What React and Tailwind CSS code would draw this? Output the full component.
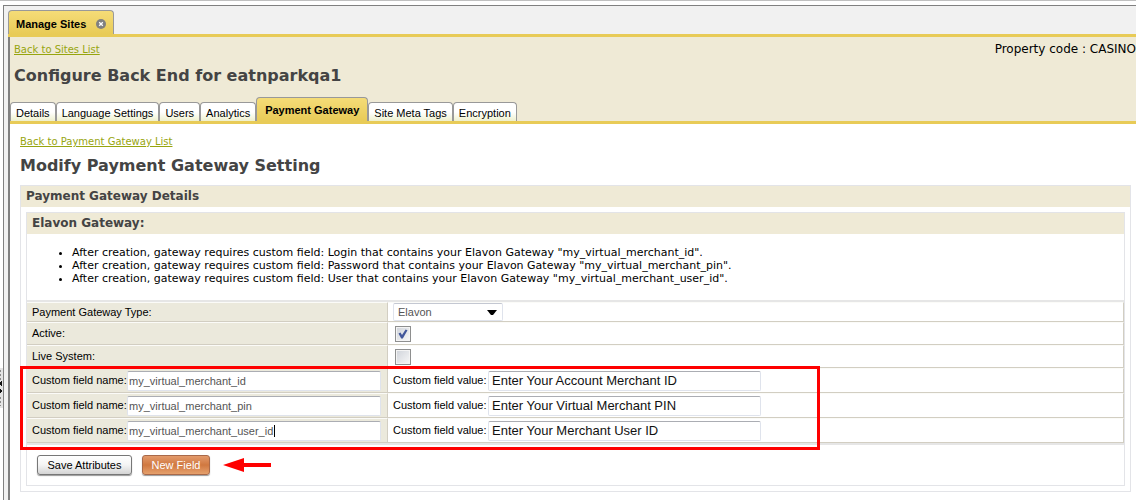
import React, { useState } from "react";
import clsx from "clsx";

const VERDANA = "font-['Verdana','DejaVu_Sans',sans-serif]";

const TABS = [
  "Details",
  "Language Settings",
  "Users",
  "Analytics",
  "Payment Gateway",
  "Site Meta Tags",
  "Encryption",
];

const NOTES = [
  'After creation, gateway requires custom field: Login that contains your Elavon Gateway "my_virtual_merchant_id".',
  'After creation, gateway requires custom field: Password that contains your Elavon Gateway "my_virtual_merchant_pin".',
  'After creation, gateway requires custom field: User that contains your Elavon Gateway "my_virtual_merchant_user_id".',
];

const FIELDS = [
  { name: "my_virtual_merchant_id", value: "Enter Your Account Merchant ID" },
  { name: "my_virtual_merchant_pin", value: "Enter Your Virtual Merchant PIN" },
  { name: "my_virtual_merchant_user_id", value: "Enter Your Merchant User ID", caret: true },
];

function Splitter() {
  return (
    <div className="flex w-[3px] shrink-0 flex-col pt-[363px]">
      <svg className="h-10 w-[3px] bg-[#e4e4e4]" viewBox="0 0 3 40" shapeRendering="crispEdges" aria-hidden="true">
        <path d="M0 2h1v2H0zM0 6h1v2H0zM0 10h1v2H0zM0 29h1v2H0zM0 33h1v2H0zM0 37h1v1H0z" fill="#8a8a8a" />
        <path d="M2 13v5H1v-1H0v-3h1v-1zM0 21h1v1h1v2H1v1H0z" fill="#111" />
      </svg>
    </div>
  );
}

function SiteTab() {
  return (
    <div className="flex h-6 items-center gap-[10px] self-start rounded-t-[4px] border border-b-0 border-[#999] bg-gradient-to-b from-[#f5dc77] to-[#e8cb57] px-[7px] pt-[2px]">
      <span className="text-[11px] leading-4 font-bold">Manage Sites</span>
      <button type="button" aria-label="Close Manage Sites" className="block size-[10px]">
        <svg viewBox="0 0 10 10" className="size-[10px]" aria-hidden="true">
          <circle cx="5" cy="5" r="5" fill="#808080" />
          <path d="M3.2 3.2l3.6 3.6M6.8 3.2L3.2 6.8" stroke="#fff" strokeWidth="1.3" />
        </svg>
      </button>
    </div>
  );
}

function TabBar() {
  return (
    <nav className="flex items-end border-b-[3px] border-[#e8cb57]">
      {TABS.map((tab) => {
        const active = tab === "Payment Gateway";
        return (
          <a
            key={tab}
            href="#"
            className={clsx(
              "flex items-center rounded-t-[4px] border border-b-0 border-[#999] text-[11px] whitespace-nowrap",
              active
                ? "h-6 bg-gradient-to-b from-[#f5dc77] to-[#e8cb57] px-2 pt-[2px] font-bold"
                : "h-[19px] bg-gradient-to-b from-white from-50% to-[#eef0cd] px-[5px] pt-[3px]"
            )}
          >
            {tab}
          </a>
        );
      })}
    </nav>
  );
}

function CheckBox({ id, defaultChecked }) {
  return (
    <span className="ml-[2px] grid size-4">
      <input
        id={id}
        type="checkbox"
        defaultChecked={defaultChecked}
        className="peer col-start-1 row-start-1 size-4 appearance-none border border-[#8e8f8f] bg-gradient-to-br from-[#cfd3da] to-[#f8f8f8] outline-1 -outline-offset-2 outline-[#f4f4f4]"
      />
      <svg viewBox="0 0 16 16" className="pointer-events-none invisible col-start-1 row-start-1 size-4 peer-checked:visible" aria-hidden="true">
        <path d="M3.5 7.5l2-1L7 9l3.6-5.5 1.9.7L7.8 12.5H6.2z" fill="#42579b" />
      </svg>
    </span>
  );
}

function Row({ height, label, children }) {
  return (
    <tr className={height}>
      <th scope="row" className="w-[361px] border-t border-r border-b border-t-[#fbfbf8] border-r-[#d2cec2] border-b-[#d2cec2] bg-[#ebe9dc] py-0 pr-0 pl-[5px] text-left align-middle font-normal">
        {label}
      </th>
      <td className="border-t border-r border-b border-t-[#fbfbf8] border-r-[#d2cec2] border-b-[#d2cec2] py-0 pr-0 pl-[5px] align-middle">
        {children}
      </td>
    </tr>
  );
}

const inputBox =
  "block h-5 rounded-[2px] border border-[#dfe3ec] border-t-[#abadb3] bg-white outline-none";

function SettingsTable() {
  const [fields, setFields] = useState(FIELDS);
  const update = (index, key, text) =>
    setFields(fields.map((field, i) => (i === index ? { ...field, [key]: text } : field)));

  return (
    <div className="relative border-y-2 border-[#e6e6e6]">
      <table className="w-full table-fixed border-separate border-spacing-0">
        <tbody>
          <Row height="h-5" label={<label htmlFor="gateway-type">Payment Gateway Type:</label>}>
            <span className="relative block w-[110px]">
              <select id="gateway-type" className="block h-[18px] w-full appearance-none rounded-[2px] border border-[#dfe3ec] border-t-[#c4c8d2] bg-white px-1 text-[11px] leading-4 text-[#555] outline-none">
                <option>Elavon</option>
              </select>
              <svg viewBox="0 0 10 6" className="pointer-events-none absolute top-[7px] right-[6px] h-[6px] w-[10px]" aria-hidden="true">
                <path d="M0 0h10L6 5H4z" fill="#000" />
              </svg>
            </span>
          </Row>
          <Row height="h-[23px]" label={<label htmlFor="active">Active:</label>}>
            <CheckBox id="active" defaultChecked />
          </Row>
          <Row height="h-[23px]" label={<label htmlFor="live">Live System:</label>}>
            <CheckBox id="live" />
          </Row>
          {fields.map((field, index) => (
            <Row
              key={index}
              height="h-[25px]"
              label={
                <div className="flex items-center">
                  <label htmlFor={`name-${index}`} className="w-[95px] shrink-0 whitespace-nowrap">
                    Custom field name:
                  </label>
                  <span className="relative">
                    <input
                      id={`name-${index}`}
                      value={field.name}
                      onChange={(e) => update(index, "name", e.target.value)}
                      className={clsx(inputBox, "w-[254px] px-px text-[11px] text-[#555]")}
                    />
                    {field.caret && <span className="absolute top-[4px] left-[147px] h-3 w-px bg-black" />}
                  </span>
                </div>
              }
            >
              <div className="flex items-center">
                <label htmlFor={`value-${index}`} className="w-[95px] shrink-0 whitespace-nowrap">
                  Custom field value:
                </label>
                <input
                  id={`value-${index}`}
                  value={field.value}
                  onChange={(e) => update(index, "value", e.target.value)}
                  className={clsx(inputBox, "w-[273px] px-[3px] text-[13px] text-[#111]")}
                />
              </div>
            </Row>
          ))}
        </tbody>
      </table>
      <div className="pointer-events-none absolute top-[64px] -left-[7px] h-[84px] w-[800px] border-3 border-[#fe0000]" />
    </div>
  );
}

function Actions() {
  return (
    <div className="flex items-center px-[10px] pt-[10px] pb-[10px]">
      <button type="button" className="h-5 w-[95px] rounded-[3px] border border-[#777] bg-gradient-to-b from-white via-[#f4f4f4] to-[#d4d4d4] text-[11px] leading-4 shadow-[0_1px_1px_#999]">
        Save Attributes
      </button>
      <button type="button" className="ml-[10px] h-5 w-[68px] rounded-[3px] border border-[#a8694a] bg-gradient-to-b from-[#e39a6b] via-[#d07840] to-[#e5a06c] text-[11px] leading-4 text-white shadow-[0_1px_1px_#999]">
        New Field
      </button>
      <svg viewBox="0 0 48 14" className="ml-[13px] h-[14px] w-12" aria-hidden="true">
        <path d="M0 7L21 0V5H48V9H21V14z" fill="#fe0000" />
      </svg>
    </div>
  );
}

export default function App() {
  return (
    <div className="flex min-h-screen flex-col overflow-x-hidden border-t border-[#c0c0c0] bg-white pt-1 font-['Arial','Liberation_Sans',sans-serif] text-[11px] leading-[13px] text-black">
      <div className="flex grow">
        <Splitter />
        <div className="flex min-w-0 grow flex-col border-t border-l border-[#808080] bg-[#f1f1f1] pt-1 pl-1">
          <div className="flex border-b-[3px] border-[#e8cb57]">
            <SiteTab />
          </div>
          <div className="flex grow flex-col border-l-2 border-[#808080] bg-white">
            <header className="bg-[#efead6]">
              <div className={clsx("flex justify-between pt-[6px] pl-1", VERDANA)}>
                <a href="#" className="text-[10px] text-[#97a50f] underline">Back to Sites List</a>
                <span className="text-[12px] whitespace-nowrap">Property code : CASINO</span>
              </div>
              <h1 className={clsx("pt-[10px] pb-[11px] pl-1 text-[16px] leading-5 font-bold text-[#444]", VERDANA)}>
                Configure Back End for eatnparkqa1
              </h1>
              <TabBar />
            </header>
            <main className="pt-[11px] pr-[5px] pl-[10px]">
              <a href="#" className={clsx("block text-[10px] text-[#97a50f] underline", VERDANA)}>Back to Payment Gateway List</a>
              <h2 className={clsx("pt-2 pb-[9px] text-[16px] leading-5 font-bold text-[#444]", VERDANA)}>
                Modify Payment Gateway Setting
              </h2>
              <section className="border border-[#e3e4e8]">
                <h3 className={clsx("bg-[#efead6] px-[5px] py-1 text-[12px] font-bold text-[#444]", VERDANA)}>Payment Gateway Details</h3>
                <div className="p-[5px]">
                  <div className="border border-[#e3e4e8]">
                    <h4 className={clsx("bg-[#efead6] px-[5px] py-1 text-[12px] font-bold text-[#444]", VERDANA)}>Elavon Gateway:</h4>
                    <ul className={clsx("list-disc pt-3 pb-[15px] pl-[45px]", VERDANA)}>
                      {NOTES.map((note) => (
                        <li key={note}>{note}</li>
                      ))}
                    </ul>
                    <SettingsTable />
                    <Actions />
                  </div>
                </div>
              </section>
            </main>
          </div>
        </div>
      </div>
    </div>
  );
}
